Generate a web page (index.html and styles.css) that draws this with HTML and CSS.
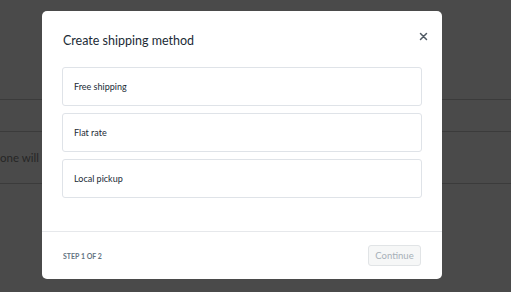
FILE: index.html
```html
<!DOCTYPE html>
<html lang="en">
<head>
    <meta charset="UTF-8">
    <meta name="viewport" content="width=device-width, initial-scale=1.0">
    <title>Create shipping method</title>
    <link rel="stylesheet" href="styles.css">
</head>
<body>
    <div class="page">
        <div class="page-top"></div>
        <div class="page-row"></div>
        <div class="page-row page-row-text">
            <span>one will see this rate</span>
        </div>
        <div class="page-rest"></div>
    </div>

    <div class="modal">
        <div class="modal-header">
            <h2 class="modal-title">Create shipping method</h2>
            <button class="modal-close" aria-label="Close">
                <svg width="9" height="9" viewBox="0 0 9 9">
                    <path d="M1.5 1.5 L7.5 7.5 M7.5 1.5 L1.5 7.5" stroke="#505a64" stroke-width="1.5" stroke-linecap="round"/>
                </svg>
            </button>
        </div>
        <div class="modal-body">
            <ul class="method-list">
                <li class="method">Free shipping</li>
                <li class="method">Flat rate</li>
                <li class="method">Local pickup</li>
            </ul>
        </div>
        <div class="modal-footer">
            <span class="step">Step 1 of 2</span>
            <button class="btn-continue" disabled>Continue</button>
        </div>
    </div>
</body>
</html>
```

FILE: styles.css
```css
body {
    margin: 0;
    background-color: #4a4a4a;
    font-family: 'Lato', 'Noto Sans', sans-serif;
    overflow: hidden;
}

.page {
    height: 292px;
}

.page-top {
    height: 99px;
    border-bottom: 1px solid #3b3b3b;
}

.page-row {
    height: 31px;
    border-bottom: 1px solid #3b3b3b;
}

.page-row-text {
    height: 51px;
    display: flex;
    align-items: center;
    font-size: 11.5px;
    color: #262626;
}

.modal {
    position: absolute;
    left: 42px;
    top: 11px;
    width: 400px;
    height: 268px;
    background-color: white;
    border-radius: 5px;
    display: flex;
    flex-direction: column;
}

.modal-header {
    display: flex;
    justify-content: space-between;
    align-items: flex-start;
    padding: 21px 14px 0 21px;
}

.modal-title {
    margin: 0;
    font-size: 12.5px;
    line-height: 17px;
    font-weight: normal;
    color: #212b36;
}

.modal-close {
    border: none;
    background: none;
    padding: 0;
    width: 9px;
    height: 9px;
    display: flex;
    cursor: pointer;
}

.modal-body {
    flex: 1;
    padding: 18px 20px 0 20px;
}

.method-list {
    list-style: none;
    margin: 0;
    padding: 0;
    display: flex;
    flex-direction: column;
    gap: 7px;
}

.method {
    height: 37px;
    display: flex;
    align-items: center;
    padding-left: 11px;
    border: 1px solid #dfe3e8;
    border-radius: 3px;
    font-size: 9px;
    color: #212b36;
}

.modal-footer {
    height: 47px;
    border-top: 1px solid #e6e8eb;
    display: flex;
    justify-content: space-between;
    align-items: center;
    padding: 0 21px;
}

.step {
    text-transform: uppercase;
    font-size: 7px;
    font-weight: bold;
    color: #637381;
}

.btn-continue {
    width: 53px;
    height: 21px;
    padding: 0;
    font-family: inherit;
    font-size: 9.5px;
    color: #a7b0b8;
    background-color: #f6f7f7;
    border: 1px solid #e1e4e6;
    border-radius: 3px;
}
```
